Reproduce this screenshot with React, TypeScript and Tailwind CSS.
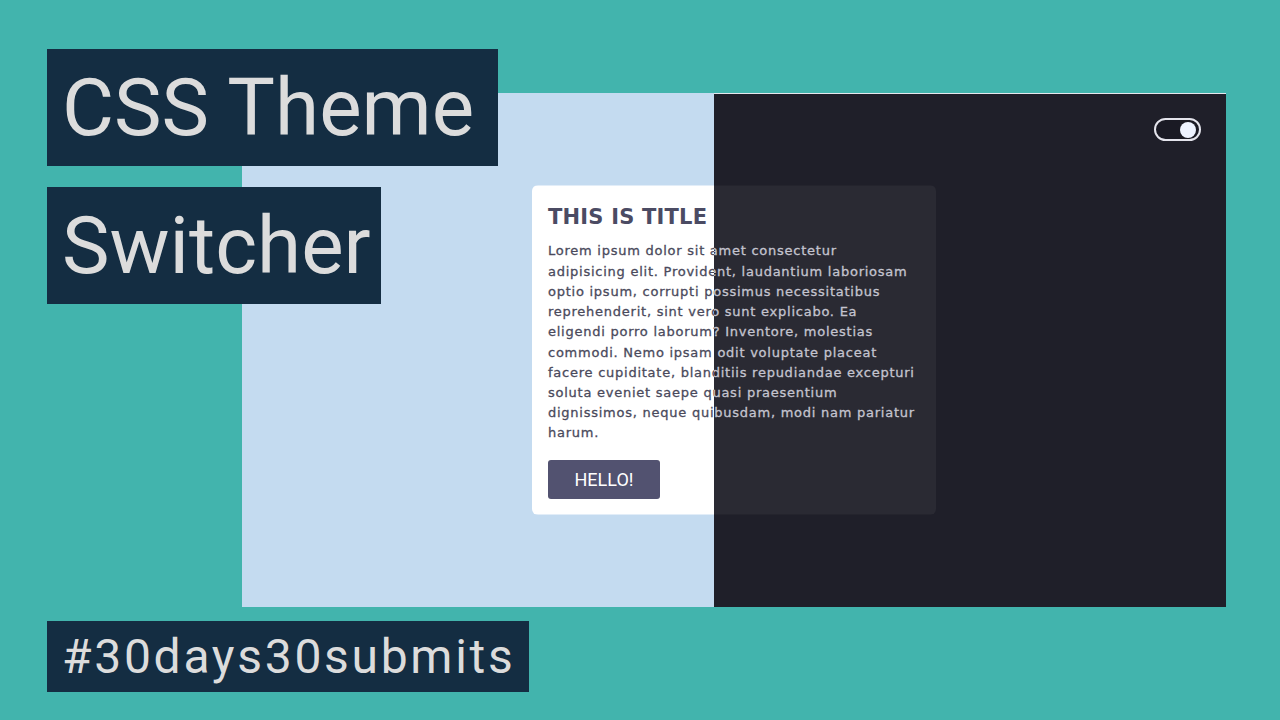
const lines = [
	"Lorem ipsum dolor sit amet consectetur",
	"adipisicing elit. Provident, laudantium laboriosam",
	"optio ipsum, corrupti possimus necessitatibus",
	"reprehenderit, sint vero sunt explicabo. Ea",
	"eligendi porro laborum? Inventore, molestias",
	"commodi. Nemo ipsam odit voluptate placeat",
	"facere cupiditate, blanditiis repudiandae excepturi",
	"soluta eveniet saepe quasi praesentium",
	"dignissimos, neque quibusdam, modi nam pariatur",
	"harum.",
];

// the card is drawn twice in the same grid cell; each copy is clipped to its half of the screen
function Card({ dark }: { dark?: boolean }) {
	return (
		<div
			className={
				dark
					? "col-start-1 row-start-1 rounded-md bg-[#2a2a33] px-4 pt-[17px] pb-[16px] [clip-path:inset(0_0_0_182px)]"
					: "col-start-1 row-start-1 rounded-md bg-white px-4 pt-[17px] pb-[16px] [clip-path:inset(0_222px_0_0)]"
			}
		>
			<h2
				className={
					dark
						? "font-['DejaVu_Sans',sans-serif] text-[21px] font-semibold leading-[30px] tracking-[0.2px] text-[#c8c8d4]"
						: "font-['DejaVu_Sans',sans-serif] text-[21px] font-semibold leading-[30px] tracking-[0.2px] text-[#4b4b63]"
				}
			>
				THIS IS TITLE
			</h2>
			<p
				className={
					dark
						? "mt-[9px] font-['DejaVu_Sans',sans-serif] text-[13px] leading-[20.2px] tracking-[0.75px] whitespace-nowrap text-[#c4c4cf] [-webkit-text-stroke:0.3px_#c4c4cf]"
						: "mt-[9px] font-['DejaVu_Sans',sans-serif] text-[13px] leading-[20.2px] tracking-[0.75px] whitespace-nowrap text-[#4a4a5c] [-webkit-text-stroke:0.3px_#4a4a5c]"
				}
			>
				{lines.map((line) => (
					<span key={line} className="block">
						{line}
					</span>
				))}
			</p>
			<button
				type="button"
				className="mt-[16px] h-[39px] w-[112px] rounded-[3px] bg-[#525270] font-['Roboto',sans-serif] text-[18px] text-white"
			>
				HELLO!
			</button>
		</div>
	);
}

function Label({ children, className }: { children: string; className: string }) {
	return (
		<div
			className={`flex items-center bg-[#142d42] pl-[15px] font-['Roboto',sans-serif] text-[#dcdcdc] ${className}`}
		>
			{children}
		</div>
	);
}

export default function App() {
	return (
		<div className="grid h-[720px] w-[1280px] overflow-hidden bg-[#42b4ad]">
			<div className="col-start-1 row-start-1 pt-[93px] pl-[242px]">
				<div className="grid h-[514px] w-[984px]">
					<div className="col-start-1 row-start-1 flex">
						<div className="w-[472px] bg-[#c4dbf0]" />
						<div className="flex-1 border-t border-[#e6e8ee] bg-[#1f1f29]" />
					</div>
					<div className="col-start-1 row-start-1 flex items-start justify-end pt-[25px] pr-[25px]">
						<div className="flex h-[23px] w-[47px] items-center justify-end rounded-full border-2 border-[#e4e4ec] bg-[#1a1a24] px-[3px]">
							<div className="h-[16px] w-[16px] rounded-full bg-[#eef3ff]" />
						</div>
					</div>
					<div className="col-start-1 row-start-1 flex items-center justify-center">
						<div className="grid w-[404px]">
							<Card />
							<Card dark />
						</div>
					</div>
				</div>
			</div>

			<div className="col-start-1 row-start-1 flex flex-col items-start pt-[49px] pb-[28px] pl-[47px]">
				<Label className="h-[117px] w-[451px] text-[80px]">CSS Theme</Label>
				<Label className="mt-[21px] h-[117px] w-[334px] text-[80px]">Switcher</Label>
				<Label className="mt-auto h-[71px] w-[482px] text-[48px] tracking-[2.7px]">
					#30days30submits
				</Label>
			</div>
		</div>
	);
}
